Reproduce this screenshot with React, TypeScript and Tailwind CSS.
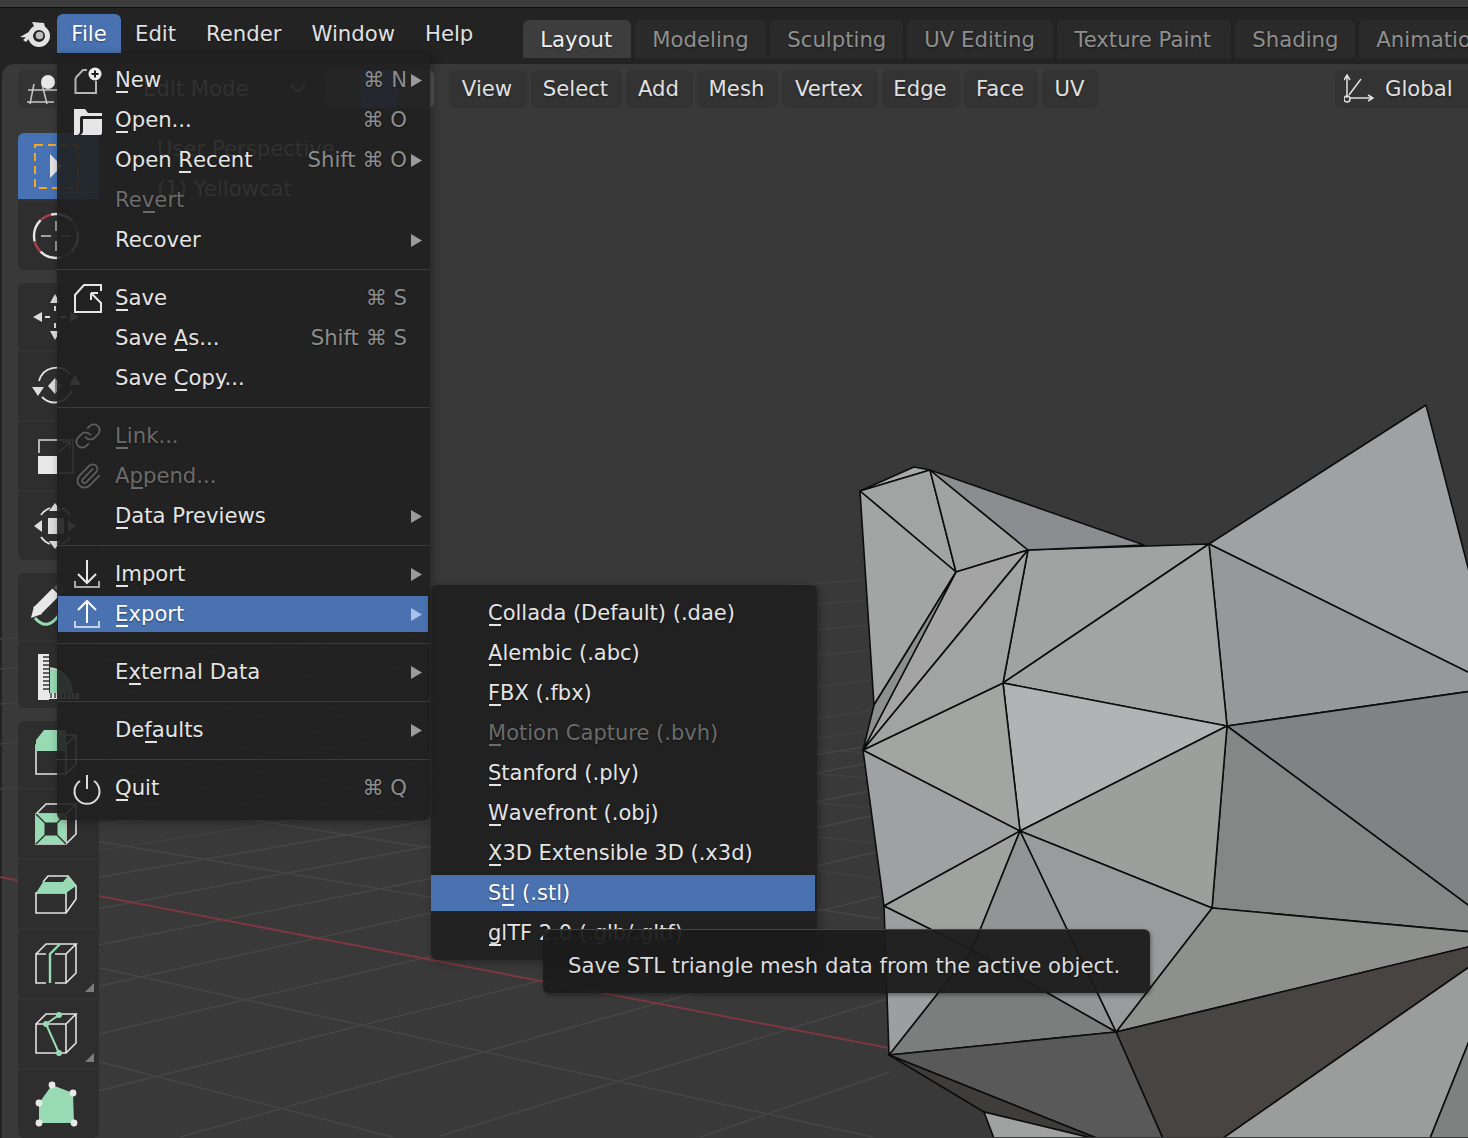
import { Link, Paperclip } from "lucide-react"
import type { ReactNode } from "react"

const topMenu = ["Edit", "Render", "Window", "Help"]
const tabs = [
  { name: "Modeling", w: "w-[131px]" },
  { name: "Sculpting", w: "w-[133px]" },
  { name: "UV Editing", w: "w-[146px]" },
  { name: "Texture Paint", w: "w-[174px]" },
  { name: "Shading", w: "w-[120px]" },
  { name: "Animation", w: "w-[140px]" },
]
const headerMenu = [
  { name: "View", w: "w-[78px]" },
  { name: "Select", w: "w-[91px]" },
  { name: "Add", w: "w-[67px]" },
  { name: "Mesh", w: "w-[81px]" },
  { name: "Vertex", w: "w-[96px]" },
  { name: "Edge", w: "w-[78px]" },
  { name: "Face", w: "w-[74px]" },
  { name: "UV", w: "w-[57px]" },
]

const GREEN = "#97dab3"
const LINE = "#e2e2e2"

function Label({ text, u }: { text: string; u: number }) {
  if (u < 0) return <span>{text}</span>
  return (
    <span>
      {text.slice(0, u)}
      <span className="relative inline-block">
        {text[u]}
        <span className="absolute left-px top-full h-[2px] w-3 bg-current" />
      </span>
      {text.slice(u + 1)}
    </span>
  )
}

function Arrow({ active }: { active?: boolean }) {
  return (
    <svg width="11" height="13" viewBox="0 0 11 13">
      <path d="M0 0 L11 6.5 L0 13Z" fill={active ? "#a9c1e8" : "#9b9b9b"} />
    </svg>
  )
}

function MenuRow({
  label,
  u,
  icon,
  shortcut,
  arrow,
  disabled,
  active,
}: {
  label: string
  u: number
  icon?: ReactNode
  shortcut?: string
  arrow?: boolean
  disabled?: boolean
  active?: boolean
}) {
  return (
    <div className="h-10 pt-[3px] ml-px mr-[2px]">
      <div className={`flex h-9 items-center pl-4 ${active ? "bg-[#4a72b0]" : ""}`}>
        <div className="w-7 h-7 mr-[13px] shrink-0">{icon}</div>
        <span className={disabled ? "text-[#6b6b6b]" : active ? "text-white" : "text-[#e4e4e4]"}>
          <Label text={label} u={u} />
        </span>
        <span className="ml-auto text-[#8d8d8d] whitespace-pre">{shortcut}</span>
        <span className="w-[21px] shrink-0 pl-1 flex items-center">{arrow && <Arrow active={active} />}</span>
      </div>
    </div>
  )
}

function Sep() {
  return (
    <div className="h-[18px] pt-[10px]">
      <div className="h-px bg-[#3b3b3b]" />
    </div>
  )
}

function SubRow({ label, u, disabled, active }: { label: string; u: number; disabled?: boolean; active?: boolean }) {
  return (
    <div className="h-10 pt-[3px] mr-[2px]">
      <div className={`flex h-9 items-center pl-[57px] ${active ? "bg-[#4a72b0] text-white" : disabled ? "text-[#6b6b6b]" : "text-[#e4e4e4]"}`}>
        <Label text={label} u={u} />
      </div>
    </div>
  )
}

function BlenderLogo() {
  return (
    <svg width="30" height="28" viewBox="0 0 30 28" className="shrink-0">
      <circle cx="19" cy="16" r="8.5" fill="none" stroke="#e2e2e2" strokeWidth="5" />
      <circle cx="19.5" cy="15.5" r="3.8" fill="#bdbdbd" />
      <path d="M12 2 L24 3 L25 7 L15 8Z M0 17 L16 8 L14 13 L6 22 L3 20 L6 17.5Z" fill="#e2e2e2" />
    </svg>
  )
}

function Tri() {
  return (
    <svg width="9" height="9" viewBox="0 0 9 9" className="absolute right-[5px] bottom-[6px]">
      <path d="M9 0 V9 H0Z" fill="#7d7d7d" />
    </svg>
  )
}

function Cube({ t = 14, b = 43 }: { t?: number; b?: number }) {
  return (
    <path
      d={`M2 ${t} H32 V${b} H2Z M2 ${t} L12 ${t - 10} H42 L32 ${t} M42 ${t - 10} V${b - 10} L32 ${b}`}
      fill="none"
      stroke={LINE}
      strokeWidth="1.6"
    />
  )
}

function Ico({ children }: { children: ReactNode }) {
  return (
    <svg width="48" height="48" viewBox="0 0 48 48" className="overflow-visible shrink-0">
      {children}
    </svg>
  )
}

const tri = (pts: string, fill = "#dedede") => <polygon points={pts} fill={fill} />

const tools: { h: string; icon: ReactNode; sel?: boolean; tri?: boolean }[][] = [
  [
    {
      h: "h-[66px]",
      sel: true,
      tri: true,
      icon: (
        <Ico>
          <rect x="1" y="3" width="43" height="43" fill="none" stroke="#f5a623" strokeWidth="2" strokeDasharray="8 5" />
          <path d="M16 12 L28 24 L16 36Z" fill="#e4e4e4" />
        </Ico>
      ),
    },
    {
      h: "h-[71px]",
      icon: (
        <Ico>
          <circle cx="22" cy="24" r="22" fill="none" stroke="#e8e8e8" strokeWidth="2.4" strokeDasharray="23 11.6" strokeDashoffset="6" />
          <circle cx="22" cy="24" r="22" fill="none" stroke="#a5404a" strokeWidth="2.4" strokeDasharray="11.6 23" strokeDashoffset="-17" />
          <path d="M22 9 V19 M22 29 V39 M7 24 H17 M27 24 H37" stroke="#c8c8c8" strokeWidth="1.4" />
        </Ico>
      ),
    },
  ],
  [
    {
      h: "h-[67px]",
      icon: (
        <Ico>
          {tri("21,1 26,10 16,10")}
          {tri("21,47 26,38 16,38")}
          {tri("-1,24 8,19 8,29")}
          {tri("45,24 36,19 36,29")}
          <path d="M21 13 V18 M21 30 V35 M11 24 H16 M26 24 H33" stroke="#dedede" strokeWidth="2" />
        </Ico>
      ),
    },
    {
      h: "h-[70px]",
      icon: (
        <Ico>
          <path d="M5 19 A18 18 0 0 1 36 12 M38 28 A18 18 0 0 1 8 35" fill="none" stroke="#e2e2e2" strokeWidth="1.8" />
          {tri("-2,25 10,25 4,34")}
          {tri("35,23 47,23 41,13")}
          {tri("21,16 21,32 14,24")}
          {tri("21,16 21,32 28,24", "#8b8b8b")}
        </Ico>
      ),
    },
    {
      h: "h-[70px]",
      icon: (
        <Ico>
          <rect x="4" y="24" width="19" height="18" fill="#e8e8e8" />
          <path d="M5 21 V8 H39 V41 H25" fill="none" stroke="#d8d8d8" strokeWidth="1.6" />
          <path d="M25 20 L36 10 M29 10 H36 V17" fill="none" stroke="#d8d8d8" strokeWidth="1.6" />
        </Ico>
      ),
    },
    {
      h: "h-[70px]",
      icon: (
        <Ico>
          <path d="M7 13 A19 19 0 0 1 16 6 M28 6 A19 19 0 0 1 36 13 M7 35 A19 19 0 0 0 16 42 M28 42 A19 19 0 0 0 36 35" fill="none" stroke="#e2e2e2" strokeWidth="1.8" />
          <rect x="14" y="16" width="16" height="16" fill="#dcdcdc" />
          {tri("21,1 27,9 15,9")}
          {tri("21,47 27,39 15,39")}
          {tri("0,24 8,18 8,30")}
          {tri("42,24 34,18 34,30")}
        </Ico>
      ),
    },
  ],
  [
    {
      h: "h-[67px]",
      icon: (
        <Ico>
          <path d="M1 35 Q13 49 25 32" fill="none" stroke={GREEN} strokeWidth="3" />
          <path d="M3 28 L22 9" stroke="#e8e8e8" strokeWidth="10" />
          <path d="M-3 35 L0 23 L8 31Z" fill="#e8e8e8" />
          <path d="M23 8 L29 3" stroke="#5a5a5a" strokeWidth="10" />
        </Ico>
      ),
    },
    {
      h: "h-[68px]",
      icon: (
        <Ico>
          <path d="M16 42 V17 A24 24 0 0 1 38 42Z" fill={GREEN} />
          <path d="M16 17 A24 24 0 0 1 38 42" fill="none" stroke="#d8d8d8" strokeWidth="1.5" />
          <rect x="4" y="3" width="11" height="46" fill="#e8e8e8" />
          <rect x="4" y="42" width="41" height="6" fill="#e8e8e8" />
          <path d="M9 6 H15 M9 10 H15 M9 14 H15 M9 18 H15 M9 22 H15 M9 26 H15 M9 30 H15 M9 34 H15 M9 38 H15" stroke="#333" strokeWidth="1.4" />
          <path d="M17 42 V47 M21 42 V47 M25 42 V47 M29 42 V47 M33 42 V47 M37 42 V47 M41 42 V47" stroke="#333" strokeWidth="1.4" />
        </Ico>
      ),
    },
  ],
  [
    {
      h: "h-[67px]",
      icon: (
        <Ico>
          <Cube />
          <path d="M2 9 L10 -1 H32 V20 H2Z" fill={GREEN} />
        </Ico>
      ),
    },
    {
      h: "h-[70px]",
      icon: (
        <Ico>
          <Cube t={14} b={44} />
          <path d="M2 14 H32 V44 H2Z M11 23 V35 H23 V23Z" fill={GREEN} fillRule="evenodd" />
          <path d="M2 14 L11 23 M32 14 L23 23 M2 44 L11 35 M32 44 L23 35" stroke="#2b2b2b" strokeWidth="1.4" />
          <rect x="11" y="23" width="12" height="12" fill="#2e2e2e" stroke="#2b2b2b" />
        </Ico>
      ),
    },
    {
      h: "h-[70px]",
      icon: (
        <Ico>
          <path d="M2 23 H32 V43 H2Z M9 12 L14 6 H34 L42 16 V29 L32 43" fill="none" stroke={LINE} strokeWidth="1.6" />
          <path d="M2 23 L9 12 H29 L32 23Z M29 12 L34 6 L42 16 L32 23Z" fill={GREEN} />
        </Ico>
      ),
    },
    {
      h: "h-[70px]",
      tri: true,
      icon: (
        <Ico>
          <Cube />
          <rect x="12" y="13" width="9" height="32" fill="#2e2e2e" />
          <path d="M16 43 V14 L26 4" fill="none" stroke={GREEN} strokeWidth="2.4" />
        </Ico>
      ),
    },
    {
      h: "h-[70px]",
      tri: true,
      icon: (
        <Ico>
          <Cube />
          <path d="M25 5 L12 14 L25 43" fill="none" stroke={GREEN} strokeWidth="2" />
          <circle cx="25" cy="5" r="3" fill={GREEN} />
          <circle cx="12" cy="14" r="3" fill={GREEN} />
          <circle cx="25" cy="43" r="3" fill={GREEN} />
        </Ico>
      ),
    },
    {
      h: "h-[70px]",
      icon: (
        <Ico>
          <polygon points="18,5 39,13 40,43 5,43 5,23" fill={GREEN} />
          {[
            [18, 5],
            [39, 13],
            [5, 23],
            [5, 43],
            [40, 43],
          ].map(([x, y]) => (
            <circle key={`${x}-${y}`} cx={x} cy={y} r="3.4" fill="#e8e8e8" />
          ))}
        </Ico>
      ),
    },
  ],
]

// ground grid and mesh faces, in page coordinates
const gridNear = [
  "18,892 880,745", "18,925 880,762", "18,962 880,790", "18,1005 880,815", "18,1054 880,852", "18,1112 880,897",
  "180,1138 880,942", "440,1137 887,1000", "700,1138 890,1073",
  "18,829 880,974", "100,797 880,920", "18,951 873,1138", "18,1042 393,1138",
]
const gridFar = [
  "18,864 880,730", "18,838 880,710", "100,775 880,880", "100,755 880,845", "100,735 880,810", "100,715 880,780", "100,700 880,755",
  "0,790 880,680", "0,745 880,650", "0,705 880,625", "0,670 880,600", "0,640 880,580",
]

const faces: [string, string][] = [
  ["1209,545 1426,406 1472,584 1472,675", "#a0a1a2"],
  ["1209,545 1472,675 1472,692 1227,727", "#97989a"],
  ["1227,727 1472,692 1472,909", "#818283"],
  ["1227,727 1472,909 1472,933 1212,909", "#858686"],
  ["1212,909 1472,933 1472,947 1116,1033", "#8e908e"],
  ["1116,1033 1472,947 1472,966 1219,1142 1164,1142", "#484441"],
  ["1472,966 1472,1035 1429,1142 1219,1142", "#9b9d9c"],
  ["1472,1035 1429,1142 1472,1142", "#7f8080"],
  ["1028,551 1209,545 1003,684", "#a1a3a2"],
  ["1209,545 1227,727 1003,684", "#a3a5a4"],
  ["1003,684 1227,727 1020,832", "#b1b3b4"],
  ["1227,727 1212,909 1020,832", "#9d9f9d"],
  ["1020,832 1212,909 1116,1033", "#9a9b9c"],
  ["863,751 1020,832 884,907", "#9fa2a3"],
  ["863,751 1003,684 1020,832", "#a3a5a3"],
  ["884,907 1020,832 972,951", "#a0a2a0"],
  ["1020,832 972,951 1116,1033", "#939495"],
  ["972,951 889,1056 1116,1033", "#7c7e7d"],
  ["884,907 972,951 889,1056", "#9c9ea0"],
  ["860,492 914,468 930,471", "#a8aaa9"],
  ["860,492 930,471 956,573", "#a2a4a3"],
  ["860,492 956,573 874,706", "#a3a5a4"],
  ["930,471 1028,551 956,573", "#a1a3a2"],
  ["930,471 1144,546 1028,551", "#8c8d91"],
  ["956,573 1028,551 863,751", "#a3a4a3"],
  ["956,573 863,751 874,706", "#8d8f8e"],
  ["1028,551 1003,684 863,751", "#a2a4a3"],
  ["889,1056 1116,1033 1164,1142 1104,1142", "#595959"],
  ["889,1056 1104,1142 984,1113", "#3f3d3c"],
  ["984,1113 1104,1142 995,1142", "#a0a2a1"],
]

function ViewportArt() {
  return (
    <svg className="absolute left-[-2px] top-[-65px]" width="1468" height="1138" viewBox="0 0 1468 1138">
      {gridFar.map((p) => (
        <polyline key={p} points={p} fill="none" stroke="#404040" strokeWidth="1.5" />
      ))}
      {gridNear.map((p) => (
        <polyline key={p} points={p} fill="none" stroke="#464646" strokeWidth="1.5" />
      ))}
      <line x1="0" y1="878" x2="889" y2="1049" stroke="#7b3844" strokeWidth="2" />
      {faces.map(([p, c]) => (
        <polygon key={p} points={p} fill={c} stroke="#0d0d0d" strokeWidth="1.6" strokeLinejoin="round" />
      ))}
    </svg>
  )
}

function ModeIcon() {
  return (
    <svg width="30" height="30" viewBox="0 0 30 30" className="shrink-0">
      <path d="M1 16 H30 M0 28 H27 M7 10 L3 30 M15 10 L20 30" stroke="#c8c8c8" strokeWidth="1.5" fill="none" />
      <circle cx="21" cy="8" r="7" fill="#e8e8e8" />
    </svg>
  )
}

function GlobalIcon() {
  return (
    <svg width="30" height="30" viewBox="0 0 30 30" className="shrink-0">
      <path d="M3 24 V2 M0 6 L3 1 L6 6 M6 24 H28 M24 21 L29 24 L24 27 M5 21 L17 5" stroke="#e0e0e0" strokeWidth="1.5" fill="none" />
      <circle cx="3" cy="25" r="3" fill="none" stroke="#e0e0e0" strokeWidth="1.5" />
    </svg>
  )
}

export default function App() {
  return (
    <div className="relative flex h-[1138px] w-[1468px] flex-col overflow-hidden bg-[#232323] font-['DejaVu_Sans',sans-serif] text-[21.2px] leading-none text-[#e0e0e0] whitespace-nowrap [text-shadow:0_1px_2px_rgba(0,0,0,0.45)]">
      <div className="h-[7px] shrink-0 bg-[#3d3d3d]" />
      <div className="h-px shrink-0 bg-[#0e0e0e]" />

      {/* top bar */}
      <div className="flex h-[56px] shrink-0 items-start pl-5">
        <div className="mt-3 shrink-0">
          <BlenderLogo />
        </div>
        <div className="ml-[7px] mt-[6px] flex h-[39px] w-[64px] shrink-0 items-center justify-center rounded-t-md bg-[#4a72b0] text-white">File</div>
        <div className="mt-[6px] flex h-[39px] shrink-0 -ml-px">
          {topMenu.map((m) => (
            <div key={m} className="flex items-center px-[15px]">
              {m}
            </div>
          ))}
        </div>
        <div className="ml-[35px] mt-3 flex shrink-0 gap-1">
          <div className="flex h-[38px] w-[108px] items-center justify-center rounded-t-md bg-[#3d3d3d] pt-[2px] pr-[2px] text-[#eeeeee]">Layout</div>
          {tabs.map((t) => (
            <div key={t.name} className={`flex h-[38px] shrink-0 items-center rounded-t-md bg-[#2a2a2a] pl-[17px] pt-[2px] text-[#8f8f8f] ${t.w}`}>
              {t.name}
            </div>
          ))}
        </div>
      </div>

      {/* viewport */}
      <div className="relative ml-[2px] flex-1 rounded-tl-xl bg-[#393939]">
        <ViewportArt />

        <div className="relative flex pl-4 pt-[6px]">
          <div className="flex h-[38px] w-[294px] items-center rounded-md bg-[#333333] pl-[9px] text-[#c8c8c8]">
            <ModeIcon />
            <span className="ml-[86px]">Edit Mode</span>
            <svg width="16" height="10" viewBox="0 0 16 10" className="ml-auto mr-[6px]">
              <path d="M1 1 L8 8 L15 1" fill="none" stroke="#b0b0b0" strokeWidth="2" />
            </svg>
          </div>
          <div className="ml-[13px] flex h-[38px] w-[109px] overflow-hidden rounded-md bg-[#545454]">
            <div className="w-9" />
            <div className="w-9 bg-[#4a72b0]" />
          </div>
          <div className="ml-[15px] flex gap-1">
            {headerMenu.map((m) => (
              <div key={m.name} className={`flex h-[38px] items-center justify-center rounded-md bg-[#333333] pr-[2px] ${m.w}`}>
                {m.name}
              </div>
            ))}
          </div>
          <div className="ml-auto flex h-[38px] w-[133px] items-center gap-[11px] rounded-l-md bg-[#333333] pl-[9px]">
            <GlobalIcon />
            Global
          </div>
        </div>

        <div className="absolute left-[155px] top-[74px] text-[#c8c8c8]">User Perspective</div>
        <div className="absolute left-[155px] top-[114px] text-[#c8c8c8]">(1) Yellowcat</div>

        {/* toolbar */}
        <div className="relative ml-4 mt-[25px] flex w-[81px] flex-col gap-[13px]">
          {tools.map((group, g) => (
            <div key={g} className="flex flex-col overflow-hidden rounded-md bg-[#2e2e2e]">
              {group.map((tool, i) => (
                <div
                  key={i}
                  className={`relative flex shrink-0 items-center pl-4 ${tool.h} ${tool.sel ? "bg-[#4772b3]" : ""} ${i > 0 ? "border-t-2 border-[#333333]" : ""}`}
                >
                  {tool.icon}
                  {tool.tri && <Tri />}
                </div>
              ))}
            </div>
          ))}
        </div>
      </div>

      {/* file menu */}
      <div className="absolute left-[57px] top-[53px] w-[373px] rounded-b-md bg-[#202020]/90 pt-[6px] pb-[13px] shadow-[2px_2px_8px_rgba(0,0,0,0.35)]">
        <MenuRow
          label="New"
          u={0}
          shortcut="⌘ N"
          arrow
          icon={
            <svg width="28" height="28" viewBox="0 0 28 28" className="overflow-visible">
              <path d="M1.5 12 L9 4 H13 M1.5 12 V27 H22 V15" fill="none" stroke="#b5b5b5" strokeWidth="2" />
              <circle cx="21" cy="8" r="6.5" fill="#eeeeee" />
              <path d="M21 4.5 V11.5 M17.5 8 H24.5" stroke="#222" strokeWidth="2" />
            </svg>
          }
        />
        <MenuRow
          label="Open..."
          u={0}
          shortcut="⌘ O"
          icon={
            <svg width="28" height="28" viewBox="0 0 28 28" className="overflow-visible">
              <path d="M0 3 H11 L14 7 H28 V10 H8 Q6 10 6 13 V25 Q6 29 2 29 H0Z M9 13 H28 V27 Q28 29 26 29 H6 Q9 28 9 25Z" fill="#e6e6e6" />
            </svg>
          }
        />
        <MenuRow label="Open Recent" u={5} shortcut="Shift ⌘ O" arrow />
        <MenuRow label="Revert" u={2} disabled />
        <MenuRow label="Recover" u={-1} arrow />
        <Sep />
        <MenuRow
          label="Save"
          u={0}
          shortcut="⌘ S"
          icon={
            <svg width="28" height="28" viewBox="0 0 28 28" className="overflow-visible">
              <path d="M27 7 V1 H10 L1 11 V28 H27 V18 M27 19 L17 9 M17 9 H24 M17 9 V16" fill="none" stroke="#e6e6e6" strokeWidth="2" />
            </svg>
          }
        />
        <MenuRow label="Save As..." u={5} shortcut="Shift ⌘ S" />
        <MenuRow label="Save Copy..." u={5} />
        <Sep />
        <MenuRow label="Link..." u={0} disabled icon={<Link size={28} strokeWidth={1.5} className="text-[#5f5f5f]" />} />
        <MenuRow label="Append..." u={1} disabled icon={<Paperclip size={28} strokeWidth={1.5} className="text-[#5f5f5f]" />} />
        <MenuRow label="Data Previews" u={0} arrow />
        <Sep />
        <MenuRow
          label="Import"
          u={0}
          arrow
          icon={
            <svg width="28" height="28" viewBox="0 0 28 28">
              <path d="M13 0 V22 M4 14 L13 23 L22 14" fill="none" stroke="#e6e6e6" strokeWidth="2" />
              <path d="M1 21 V27 H25 V21" fill="none" stroke="#a8a8a8" strokeWidth="2" />
            </svg>
          }
        />
        <MenuRow
          label="Export"
          u={0}
          arrow
          active
          icon={
            <svg width="28" height="28" viewBox="0 0 28 28">
              <path d="M13 23 V1 M4 10 L13 1 L22 10" fill="none" stroke="#ffffff" strokeWidth="2" />
              <path d="M1 21 V27 H25 V21" fill="none" stroke="#c4d2ea" strokeWidth="2" />
            </svg>
          }
        />
        <Sep />
        <MenuRow label="External Data" u={1} arrow />
        <Sep />
        <MenuRow label="Defaults" u={2} arrow />
        <Sep />
        <MenuRow
          label="Quit"
          u={0}
          shortcut="⌘ Q"
          icon={
            <svg width="28" height="28" viewBox="0 0 28 28" className="overflow-visible">
              <path d="M13 1 V15 M6 7 A12.5 12.5 0 1 0 20 7" fill="none" stroke="#dcdcdc" strokeWidth="2" />
            </svg>
          }
        />
      </div>

      {/* export submenu */}
      <div className="absolute left-[431px] top-[585px] w-[386px] rounded-md bg-[#202020]/95 pt-[7px] pb-2 text-[21px] shadow-[2px_2px_8px_rgba(0,0,0,0.35)]">
        <SubRow label="Collada (Default) (.dae)" u={0} />
        <SubRow label="Alembic (.abc)" u={0} />
        <SubRow label="FBX (.fbx)" u={0} />
        <SubRow label="Motion Capture (.bvh)" u={0} disabled />
        <SubRow label="Stanford (.ply)" u={0} />
        <SubRow label="Wavefront (.obj)" u={0} />
        <SubRow label="X3D Extensible 3D (.x3d)" u={0} />
        <SubRow label="Stl (.stl)" u={1} active />
        <SubRow label="glTF 2.0 (.glb/.gltf)" u={0} />
      </div>

      {/* tooltip */}
      <div className="absolute left-[543px] top-[929px] flex h-[64px] w-[607px] items-center rounded-md border-t border-[#444444] bg-[#1b1b1b]/95 pl-[25px] pt-[8px] text-[#dcdcdc] shadow-[1px_2px_4px_rgba(0,0,0,0.4)]">
        Save STL triangle mesh data from the active object.
      </div>
    </div>
  )
}
